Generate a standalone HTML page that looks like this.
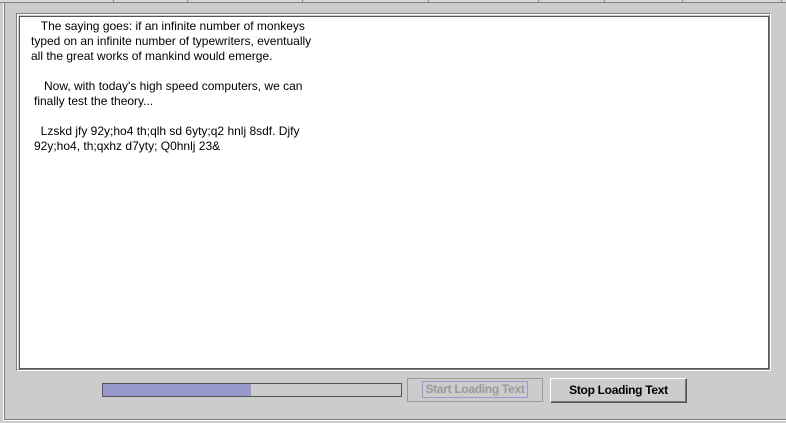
<!DOCTYPE html>
<html><head><style>
html,body{margin:0;padding:0;}
body{width:786px;height:423px;background:#cccccc;position:relative;overflow:hidden;font-family:"Liberation Sans",Arial,sans-serif;}
.a{position:absolute;}
.t{position:absolute;font-size:12px;color:#000;white-space:pre;line-height:15px;}
.sep{position:absolute;top:0;width:1px;height:3px;background:#888;}
</style></head><body>
<div class="a" style="left:0;top:0;width:786px;height:2px;border-bottom:1px solid #808080;background:#d8d8d8"></div>
<div class="sep" style="left:113px"></div><div class="sep" style="left:187px"></div><div class="sep" style="left:302px"></div><div class="sep" style="left:428px"></div><div class="sep" style="left:538px"></div><div class="sep" style="left:604px"></div><div class="sep" style="left:682px"></div><div class="sep" style="left:781px"></div>
<div class="a" style="left:3px;top:3px;width:1px;height:418px;background:#fff"></div>
<div class="a" style="left:4px;top:3px;width:1px;height:417px;background:#808080"></div>
<div class="a" style="left:4px;top:419px;width:782px;height:1px;background:#808080"></div>
<div class="a" style="left:4px;top:420px;width:782px;height:1px;background:#fff"></div>
<div class="a" style="left:16px;top:13px;width:755px;height:358px;border:1px solid #808080;border-right-color:#fff;border-bottom-color:#fff;box-sizing:border-box"></div>
<div class="a" style="left:17px;top:14px;width:753px;height:356px;border:1px solid #fff;border-right-color:#808080;border-bottom-color:#808080;box-sizing:border-box"></div>
<div class="a" style="left:19px;top:16px;width:750px;height:353px;border:1px solid #555;background:#fff;box-sizing:border-box"></div>
<div class="t" style="left:31px;top:19px">   The saying goes: if an infinite number of monkeys
typed on an infinite number of typewriters, eventually
all the great works of mankind would emerge.</div>
<div class="t" style="left:34px;top:79px">   Now, with today's high speed computers, we can
finally test the theory...</div>
<div class="t" style="left:34px;top:124px">  Lzskd jfy 92y;ho4 th;qlh sd 6yty;q2 hnlj 8sdf. Djfy
92y;ho4, th;qxhz d7yty; Q0hnlj 23&amp;</div>
<div class="a" style="left:102px;top:383px;width:300px;height:14px;border:1px solid #555;background:#cccccc;box-sizing:border-box"></div>
<div class="a" style="left:103px;top:384px;width:148px;height:12px;background:#9999cc"></div>
<div class="a" style="left:407px;top:378px;width:136px;height:24px;border:1px solid #999;box-sizing:border-box"></div>
<div class="a" style="left:422px;top:381px;width:106px;height:17px;border:1px solid #9999cc;box-sizing:border-box;font-size:12px;font-weight:bold;color:#999;text-align:center;line-height:15px;letter-spacing:-0.3px">Start Loading Text</div>
<div class="a" style="left:550px;top:378px;width:137px;height:25px;border:1px solid #555;border-top-color:#fff;border-left-color:#fff;box-sizing:border-box;font-size:12px;font-weight:bold;color:#000;text-align:center;line-height:23px;letter-spacing:-0.3px;box-shadow:-1px -1px 0 #777 inset"><span>Stop Loading Text</span></div>
</body></html>
